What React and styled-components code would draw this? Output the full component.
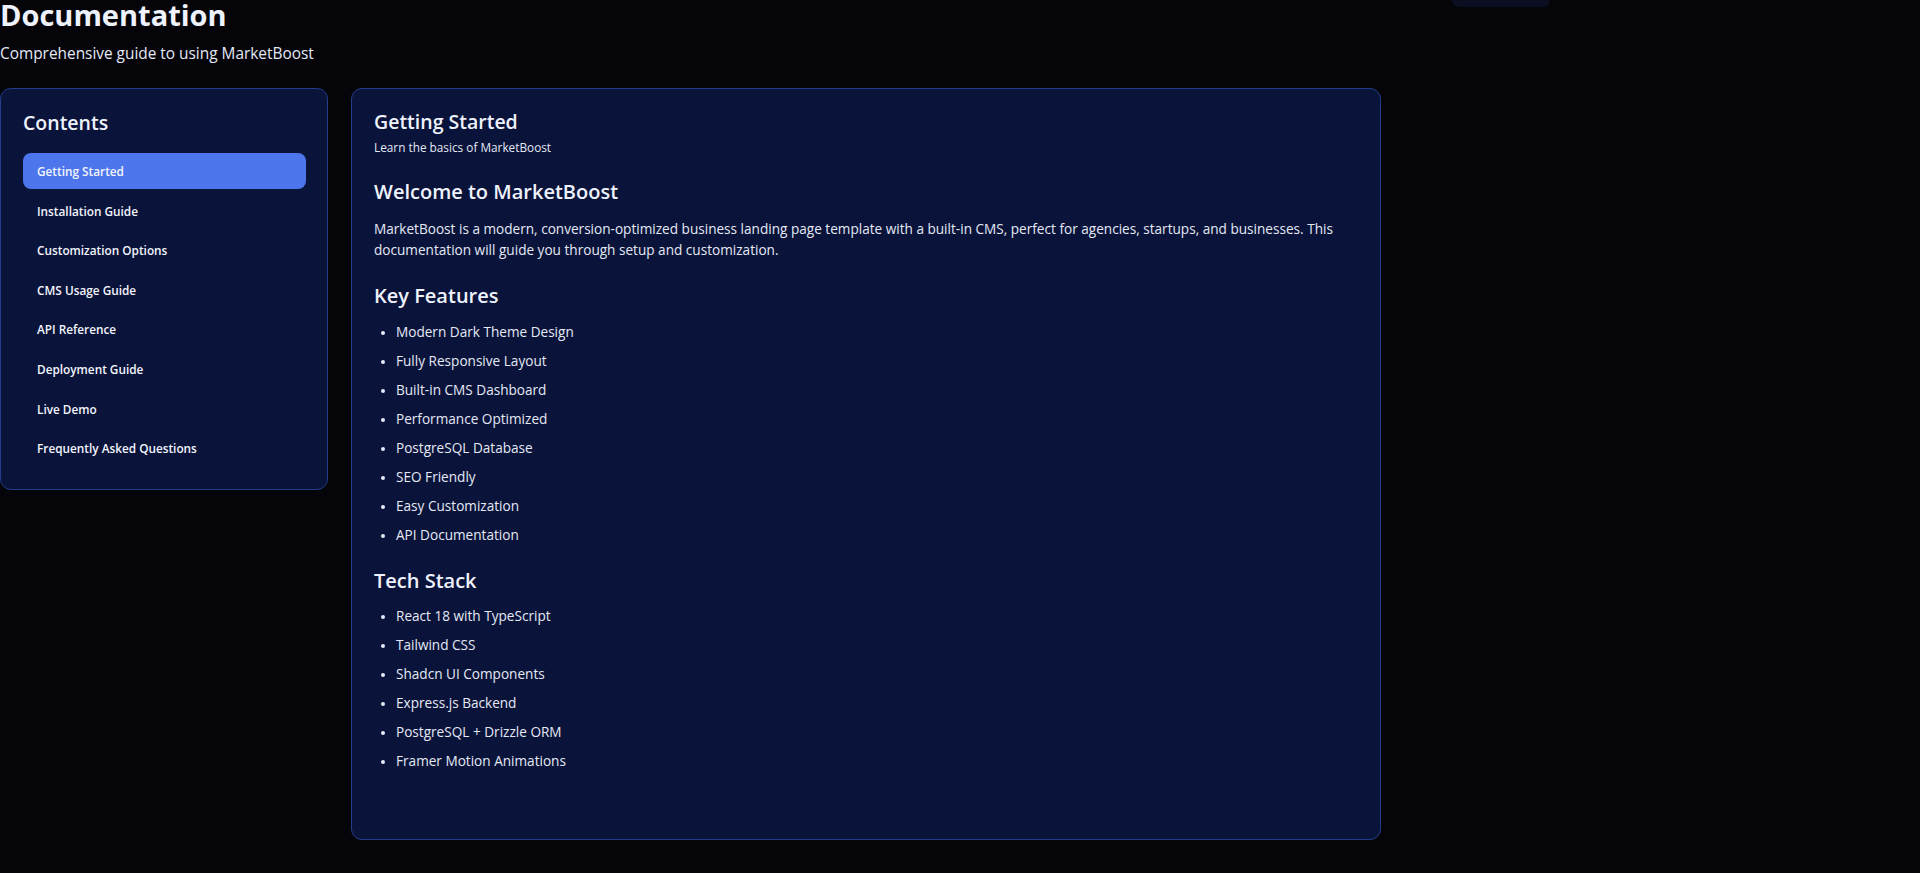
import React from "react";
import styled, { createGlobalStyle } from "styled-components";

const Global = createGlobalStyle`
  html {
    color-scheme: dark;
    overflow-y: scroll;
    background: #040409;
  }
  body {
    margin: 0;
    background: #040409;
    color: #e8edf9;
    font-family: "Open Sans", "Noto Sans", sans-serif;
  }
  * { box-sizing: border-box; }
`;

const Page = styled.div`
  min-height: 1960px;
  width: 1381px;
`;

const Header = styled.header`
  display: flex;
  align-items: flex-start;
  justify-content: space-between;
`;

const TitleBlock = styled.div`
  display: flex;
  flex-direction: column;
`;

const Title = styled.h1`
  margin: 0;
  font-size: 29px;
  line-height: 30px;
  font-weight: 700;
  color: #eef2fc;
`;

const Subtitle = styled.p`
  margin: 12px 0 0;
  font-size: 15.4px;
  line-height: 24px;
  color: #e4e9f6;
`;

const NavStub = styled.div`
  width: 98px;
  height: 7px;
  margin-right: -169px;
  background: #0b0e20;
  border-radius: 0 0 10px 10px;
`;

const Layout = styled.div`
  display: grid;
  grid-template-columns: 328px 1030px;
  gap: 23px;
  margin-top: 22px;
  align-items: start;
`;

const Card = styled.section`
  background: #0a1339;
  border: 1px solid #213d8c;
  border-radius: 11px;
`;

const Sidebar = styled(Card)`
  padding: 19px 21px 23px 22px;
`;

const SideTitle = styled.h2`
  margin: 0 0 15px;
  font-size: 19.5px;
  line-height: 30px;
  font-weight: 600;
  color: #eef2fc;
`;

const NavList = styled.nav`
  display: flex;
  flex-direction: column;
  gap: 3.6px;
`;

const NavItem = styled.button`
  all: unset;
  display: flex;
  align-items: center;
  height: 36px;
  padding: 0 14px;
  border-radius: 8px;
  font-family: "Open Sans", "Noto Sans", sans-serif;
  font-size: 11.8px;
  font-weight: 600;
  color: #f2f5fd;
  background: ${(p) => (p.$active ? "#4d75ec" : "transparent")};
  cursor: pointer;
`;

const Main = styled(Card)`
  padding: 19px 22px 68px 22px;
`;

const SectionTitle = styled.h2`
  margin: 0;
  font-size: 19.5px;
  line-height: 28px;
  font-weight: 600;
  color: #eef2fc;
`;

const Lead = styled.p`
  margin: 2px 0 0;
  font-size: 11.8px;
  line-height: 18px;
  color: #e4e9f6;
`;

const SubHeading = styled.h3`
  margin: 22px 0 0;
  font-size: 20px;
  line-height: 28px;
  font-weight: 600;
  color: #eef2fc;
`;

const Paragraph = styled.p`
  margin: 12px 0 0;
  font-size: 13.6px;
  line-height: 21px;
  color: #e4e9f6;
`;

const List = styled.ul`
  margin: 10.5px 0 0;
  padding-left: 22px;
  display: flex;
  flex-direction: column;
  gap: 8px;
`;

const Item = styled.li`
  font-size: 13.6px;
  line-height: 21px;
  color: #e4e9f6;
  &::marker { font-size: 12px; }
`;

const nav = [
  "Getting Started",
  "Installation Guide",
  "Customization Options",
  "CMS Usage Guide",
  "API Reference",
  "Deployment Guide",
  "Live Demo",
  "Frequently Asked Questions",
];

const features = [
  "Modern Dark Theme Design",
  "Fully Responsive Layout",
  "Built-in CMS Dashboard",
  "Performance Optimized",
  "PostgreSQL Database",
  "SEO Friendly",
  "Easy Customization",
  "API Documentation",
];

const stack = [
  "React 18 with TypeScript",
  "Tailwind CSS",
  "Shadcn UI Components",
  "Express.js Backend",
  "PostgreSQL + Drizzle ORM",
  "Framer Motion Animations",
];

export default function App() {
  return (
    <>
      <Global />
      <Page>
        <Header>
          <TitleBlock>
            <Title>Documentation</Title>
            <Subtitle>Comprehensive guide to using MarketBoost</Subtitle>
          </TitleBlock>
          <NavStub />
        </Header>
        <Layout>
          <Sidebar>
            <SideTitle>Contents</SideTitle>
            <NavList>
              {nav.map((n, i) => (
                <NavItem key={n} $active={i === 0}>
                  {n}
                </NavItem>
              ))}
            </NavList>
          </Sidebar>
          <Main>
            <SectionTitle>Getting Started</SectionTitle>
            <Lead>Learn the basics of MarketBoost</Lead>
            <SubHeading>Welcome to MarketBoost</SubHeading>
            <Paragraph>
              MarketBoost is a modern, conversion-optimized business landing page template with a
              built-in CMS, perfect for agencies, startups, and businesses. This documentation will
              guide you through setup and customization.
            </Paragraph>
            <SubHeading>Key Features</SubHeading>
            <List>
              {features.map((f) => (
                <Item key={f}>{f}</Item>
              ))}
            </List>
            <SubHeading>Tech Stack</SubHeading>
            <List>
              {stack.map((f) => (
                <Item key={f}>{f}</Item>
              ))}
            </List>
          </Main>
        </Layout>
      </Page>
    </>
  );
}
